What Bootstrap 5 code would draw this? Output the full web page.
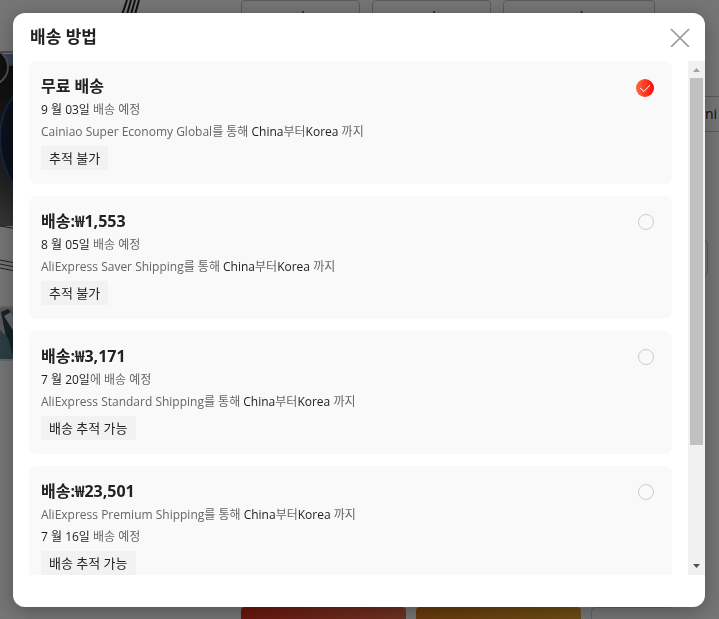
<!DOCTYPE html>
<html lang="ko">
<head>
<meta charset="utf-8">
<meta name="viewport" content="width=device-width, initial-scale=1">
<title>배송 방법</title>
<link href="https://cdn.jsdelivr.net/npm/bootstrap@5.3.0/dist/css/bootstrap.min.css" rel="stylesheet">
<style>
body { font-family: "Open Sans", "Noto Sans CJK KR", sans-serif; color: #222; background: #fff; }
.product { height: 100vh; }
.gallery { width: 229px; }
.details { padding-left: 12px; }
.chips { gap: 12px; }
.chip { height: 36px; border: 1px solid #c4c4c4; border-radius: 4px; font-size: 14px; line-height: 32px; }
.chip-s { width: 119px; }
.chip-l { width: 152px; }
.side { width: 48px; }
.coupon { height: 36px; margin-top: 96px; border: 1px solid #c4c4c4; border-right: 0; font-size: 14px; line-height: 34px; padding-left: 33px; }
.stepper { height: 36px; width: 37px; margin-top: 108px; border: 1px solid #c4c4c4; border-radius: 4px; }
.buy { height: 48px; width: 165px; border: 0; border-radius: 4px; background: linear-gradient(100deg, #e5321f, #ef7048); }
.cart { height: 48px; width: 165px; border: 0; border-radius: 4px; background: linear-gradient(100deg, #e07c18, #eca82c); }
.wish { height: 48px; width: 93px; border: 1px solid #d4d4d4; border-radius: 4px; background: transparent; }
.actions { height: 12px; gap: 10px; }
.scrim { background: rgba(0,0,0,.54); padding: 13px 14px 12px 13px; }
.dialog-box { border-radius: 12px; box-shadow: 0 4px 20px rgba(0,0,0,.3); padding-bottom: 32px; }
.dialog-head { height: 48px; padding: 0 15px 0 17px; }
.dialog-head h1 { font-size: 17px; line-height: 24px; font-weight: 700; }
.close-x { width: 20px; height: 20px; }
.ships { padding: 0 16px; gap: 12px; scrollbar-width: none; }
.ship { background: #f9f9f9; border-radius: 8px; padding: 13px 18px 14px 12px; cursor: pointer; font-size: 12px; line-height: 22px; color: #666; }
.ship h2 { font-size: 16px; line-height: 25px; font-weight: 700; color: #222; }
.ship b { font-weight: 400; color: #222; }
.track { background: #f2f2f2; color: #222; font-size: 13px; padding: 0 8px; line-height: 24px; margin-top: 3px; }
.pick { appearance: none; width: 16px; height: 16px; margin: 5px 0 0; border: 1px solid #ccc; border-radius: 50%; background: #f9f9f9; }
.pick:checked { width: 18px; height: 18px; border: 0; background: url("data:image/svg+xml,%3Csvg xmlns='http://www.w3.org/2000/svg' viewBox='0 0 18 18'%3E%3Cpath d='M4 9l4 3.5L14 6' fill='none' stroke='%23fff' stroke-width='1'/%3E%3C/svg%3E"), linear-gradient(90deg, #ff6a3a, #ff0a0a); }
.bar { width: 17px; background: #f1f1f1; }
.thumb { background: #c1c1c1; height: 367px; margin: 0 2px; }
</style>
<script src="https://cdn.jsdelivr.net/npm/bootstrap@5.3.0/dist/js/bootstrap.bundle.min.js"></script>
</head>
<body class="overflow-hidden">
<div class="product d-flex overflow-hidden">
  <svg class="gallery flex-shrink-0" height="619" viewBox="0 0 229 619" aria-hidden="true">
    <defs><linearGradient id="night" x1="0" y1="0" x2="0" y2="1"><stop offset="0" stop-color="#1c1c1c"/><stop offset=".7" stop-color="#444"/><stop offset="1" stop-color="#777"/></linearGradient></defs>
    <path d="M127 0l-6 18M131 0l-5 18M135 0l-5 18M139 0l-5 18" stroke="#222" fill="none" stroke-width="2"/>
    <path d="M0 54h30v12H0z" fill="#7590b8"/><path d="M0 52h30M0 65h30" stroke="#555"/>
    <path d="M0 66h30v160H0z" fill="url(#night)"/>
    <circle cx="-10" cy="67" r="18" fill="#222" stroke="#aaa" stroke-width="2"/>
    <path d="M30 84C-10 100-10 172 30 202z" fill="#1a2438" stroke="#2c5080" stroke-width="2"/>
    <path d="M0 226l30 5M0 260l30 6M0 264l30 6M0 268l30 6" stroke="#444" fill="none"/>
    <path d="M0 307h30M0 360h30" stroke="#bbb"/>
    <path d="M0 308h30v51H0z" fill="#c5c0cc"/><path d="M1 312l7-3 22 22v28H12l-6-22z" fill="#2c4a54"/><path d="M4 316l7-4 12 16-9 4z" fill="#dde"/><path d="M0 330l8 8 6 21H0z" fill="#5e8795"/>
  </svg>
  <div class="details flex-grow-1 d-flex flex-column justify-content-between overflow-hidden">
    <div class="chips d-flex">
      <div class="chip chip-s text-center">d</div><div class="chip chip-s text-center">d</div><div class="chip chip-l text-center">d</div>
    </div>
    <div class="actions d-flex"><button class="buy flex-shrink-0" aria-label="Buy"></button><button class="cart flex-shrink-0" aria-label="Cart"></button><button class="wish flex-shrink-0" aria-label="Wish"></button></div>
  </div>
  <div class="side flex-shrink-0"><div class="coupon">ni</div><div class="stepper"></div></div>
</div>

<div class="scrim position-fixed top-0 start-0 w-100 h-100">
  <div class="dialog-box bg-white h-100 d-flex flex-column" role="dialog" aria-labelledby="dlg">
    <header class="dialog-head d-flex align-items-center justify-content-between flex-shrink-0">
      <h1 id="dlg" class="m-0">배송 방법</h1>
      <button type="button" class="border-0 bg-transparent p-0 d-flex" aria-label="닫기">
        <svg class="close-x" viewBox="0 0 20 20" fill="none" stroke="#999" stroke-width="1.7"><path d="M1 2l18 18M19 2L1 20"/></svg>
      </button>
    </header>
    <div class="d-flex flex-grow-1 overflow-hidden">
      <div class="ships flex-grow-1 d-flex flex-column overflow-auto">
        <label class="ship d-flex justify-content-between align-items-start flex-shrink-0">
          <span><h2 class="m-0">무료 배송</h2>
            <span class="d-block"><b>9 월 03일</b> 배송 예정</span>
            <span class="d-block">Cainiao Super Economy Global를 통해 <b>China</b>부터<b>Korea</b> 까지</span>
            <span class="track d-inline-block align-top">추적 불가</span></span>
          <input class="pick" type="radio" name="ship" checked>
        </label>
        <label class="ship d-flex justify-content-between align-items-start flex-shrink-0">
          <span><h2 class="m-0">배송:₩1,553</h2>
            <span class="d-block"><b>8 월 05일</b> 배송 예정</span>
            <span class="d-block">AliExpress Saver Shipping를 통해 <b>China</b>부터<b>Korea</b> 까지</span>
            <span class="track d-inline-block align-top">추적 불가</span></span>
          <input class="pick" type="radio" name="ship">
        </label>
        <label class="ship d-flex justify-content-between align-items-start flex-shrink-0">
          <span><h2 class="m-0">배송:₩3,171</h2>
            <span class="d-block"><b>7 월 20일</b>에 배송 예정</span>
            <span class="d-block">AliExpress Standard Shipping를 통해 <b>China</b>부터<b>Korea</b> 까지</span>
            <span class="track d-inline-block align-top">배송 추적 가능</span></span>
          <input class="pick" type="radio" name="ship">
        </label>
        <label class="ship d-flex justify-content-between align-items-start flex-shrink-0">
          <span><h2 class="m-0">배송:₩23,501</h2>
            <span class="d-block">AliExpress Premium Shipping를 통해 <b>China</b>부터<b>Korea</b> 까지</span>
            <span class="d-block"><b>7 월 16일</b> 배송 예정</span>
            <span class="track d-inline-block align-top">배송 추적 가능</span></span>
          <input class="pick" type="radio" name="ship">
        </label>
      </div>
      <div class="bar flex-shrink-0 d-flex flex-column" aria-hidden="true">
        <svg width="17" height="17"><path d="M5 11h7L8.500 7z" fill="#a3a3a3"/></svg>
        <div class="thumb"></div>
        <svg class="mt-auto" width="17" height="17"><path d="M5 6h7l-3.500 4z" fill="#505050"/></svg>
      </div>
    </div>
  </div>
</div>
</body>
</html>
